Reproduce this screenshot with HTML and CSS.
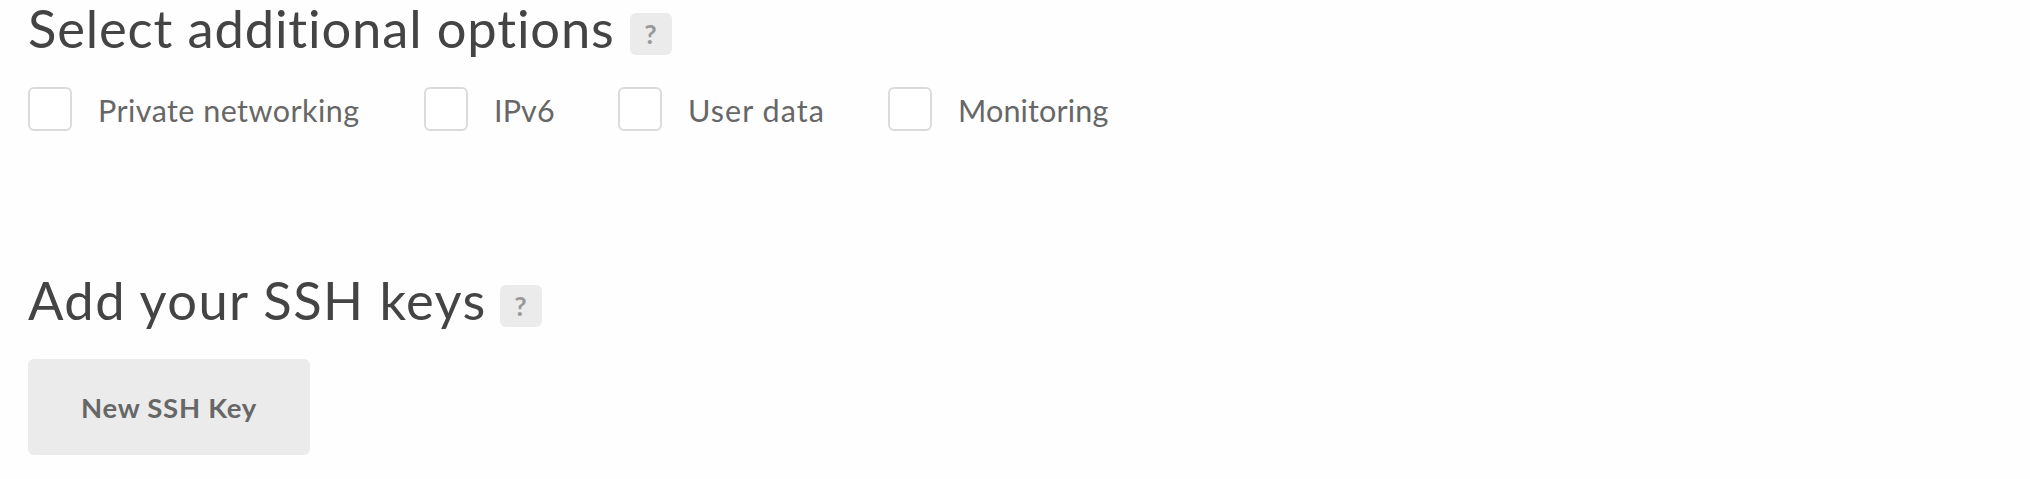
FILE: index.html
```
<!DOCTYPE html>
<html lang="en">
<head>
<meta charset="utf-8">
<title>Create</title>
<link rel="stylesheet" href="styles.css">
</head>
<body>
<main class="page">
  <section class="section">
    <h2 class="heading"><span class="title title-options">Select additional options</span><span class="help">?</span></h2>
    <div class="options">
      <label class="option private"><span class="box"></span><span class="name">Private networking</span></label>
      <label class="option ipv6"><span class="box"></span><span class="name">IPv6</span></label>
      <label class="option userdata"><span class="box"></span><span class="name">User data</span></label>
      <label class="option monitoring"><span class="box"></span><span class="name">Monitoring</span></label>
    </div>
  </section>
  <section class="section">
    <h2 class="heading"><span class="title title-keys">Add your SSH keys</span><span class="help">?</span></h2>
    <button class="new-key" type="button"><span class="new-key-text">New SSH Key</span></button>
  </section>
</main>
</body>
</html>
```
FILE: styles.css
```
body {
  margin: 0;
  background: #fefefe;
  font-family: Lato, "Open Sans", sans-serif;
}
.page {
  display: grid;
  grid-template-rows: 272px 207px;
  padding-left: 28px;
}
.section {
  display: flex;
  flex-direction: column;
  align-items: flex-start;
  gap: 33px;
}
.heading {
  display: flex;
  margin: 0;
  height: 54px;
  font-size: 52.5px;
  line-height: 56px;
  font-weight: 400;
  color: #444;
  white-space: nowrap;
}
.title-options {
  width: 602px;
  letter-spacing: 0.85px;
}
.title-keys {
  width: 472px;
  letter-spacing: 1.4px;
}
.help {
  box-sizing: border-box;
  width: 42px;
  height: 42px;
  margin-top: 13px;
  padding-right: 1px;
  border-radius: 6px;
  background: #ebebeb;
  color: #999;
  font-size: 27px;
  font-weight: 700;
  line-height: 41px;
  text-align: center;
}
.options {
  display: flex;
  height: 44px;
}
.option {
  display: flex;
  gap: 26px;
  color: #676767;
  font-size: 30.5px;
  line-height: 46px;
  letter-spacing: 0.45px;
  white-space: nowrap;
}
.private { width: 396px; }
.ipv6 {
  width: 194px;
  letter-spacing: 0.1px;
}
.userdata {
  width: 270px;
  letter-spacing: 1.05px;
}
.monitoring { letter-spacing: 0.15px; }
.box {
  box-sizing: border-box;
  flex: none;
  width: 44px;
  height: 44px;
  border: 2px solid #dbdbdb;
  border-radius: 6px;
  background: #fff;
}
.new-key {
  width: 282px;
  height: 96px;
  padding: 0;
  border: 0;
  border-radius: 6px;
  background: #ebebeb;
  color: #676767;
  font-family: inherit;
  font-size: 27.5px;
  font-weight: 700;
  line-height: 95px;
  letter-spacing: 0.7px;
  white-space: nowrap;
}
```
